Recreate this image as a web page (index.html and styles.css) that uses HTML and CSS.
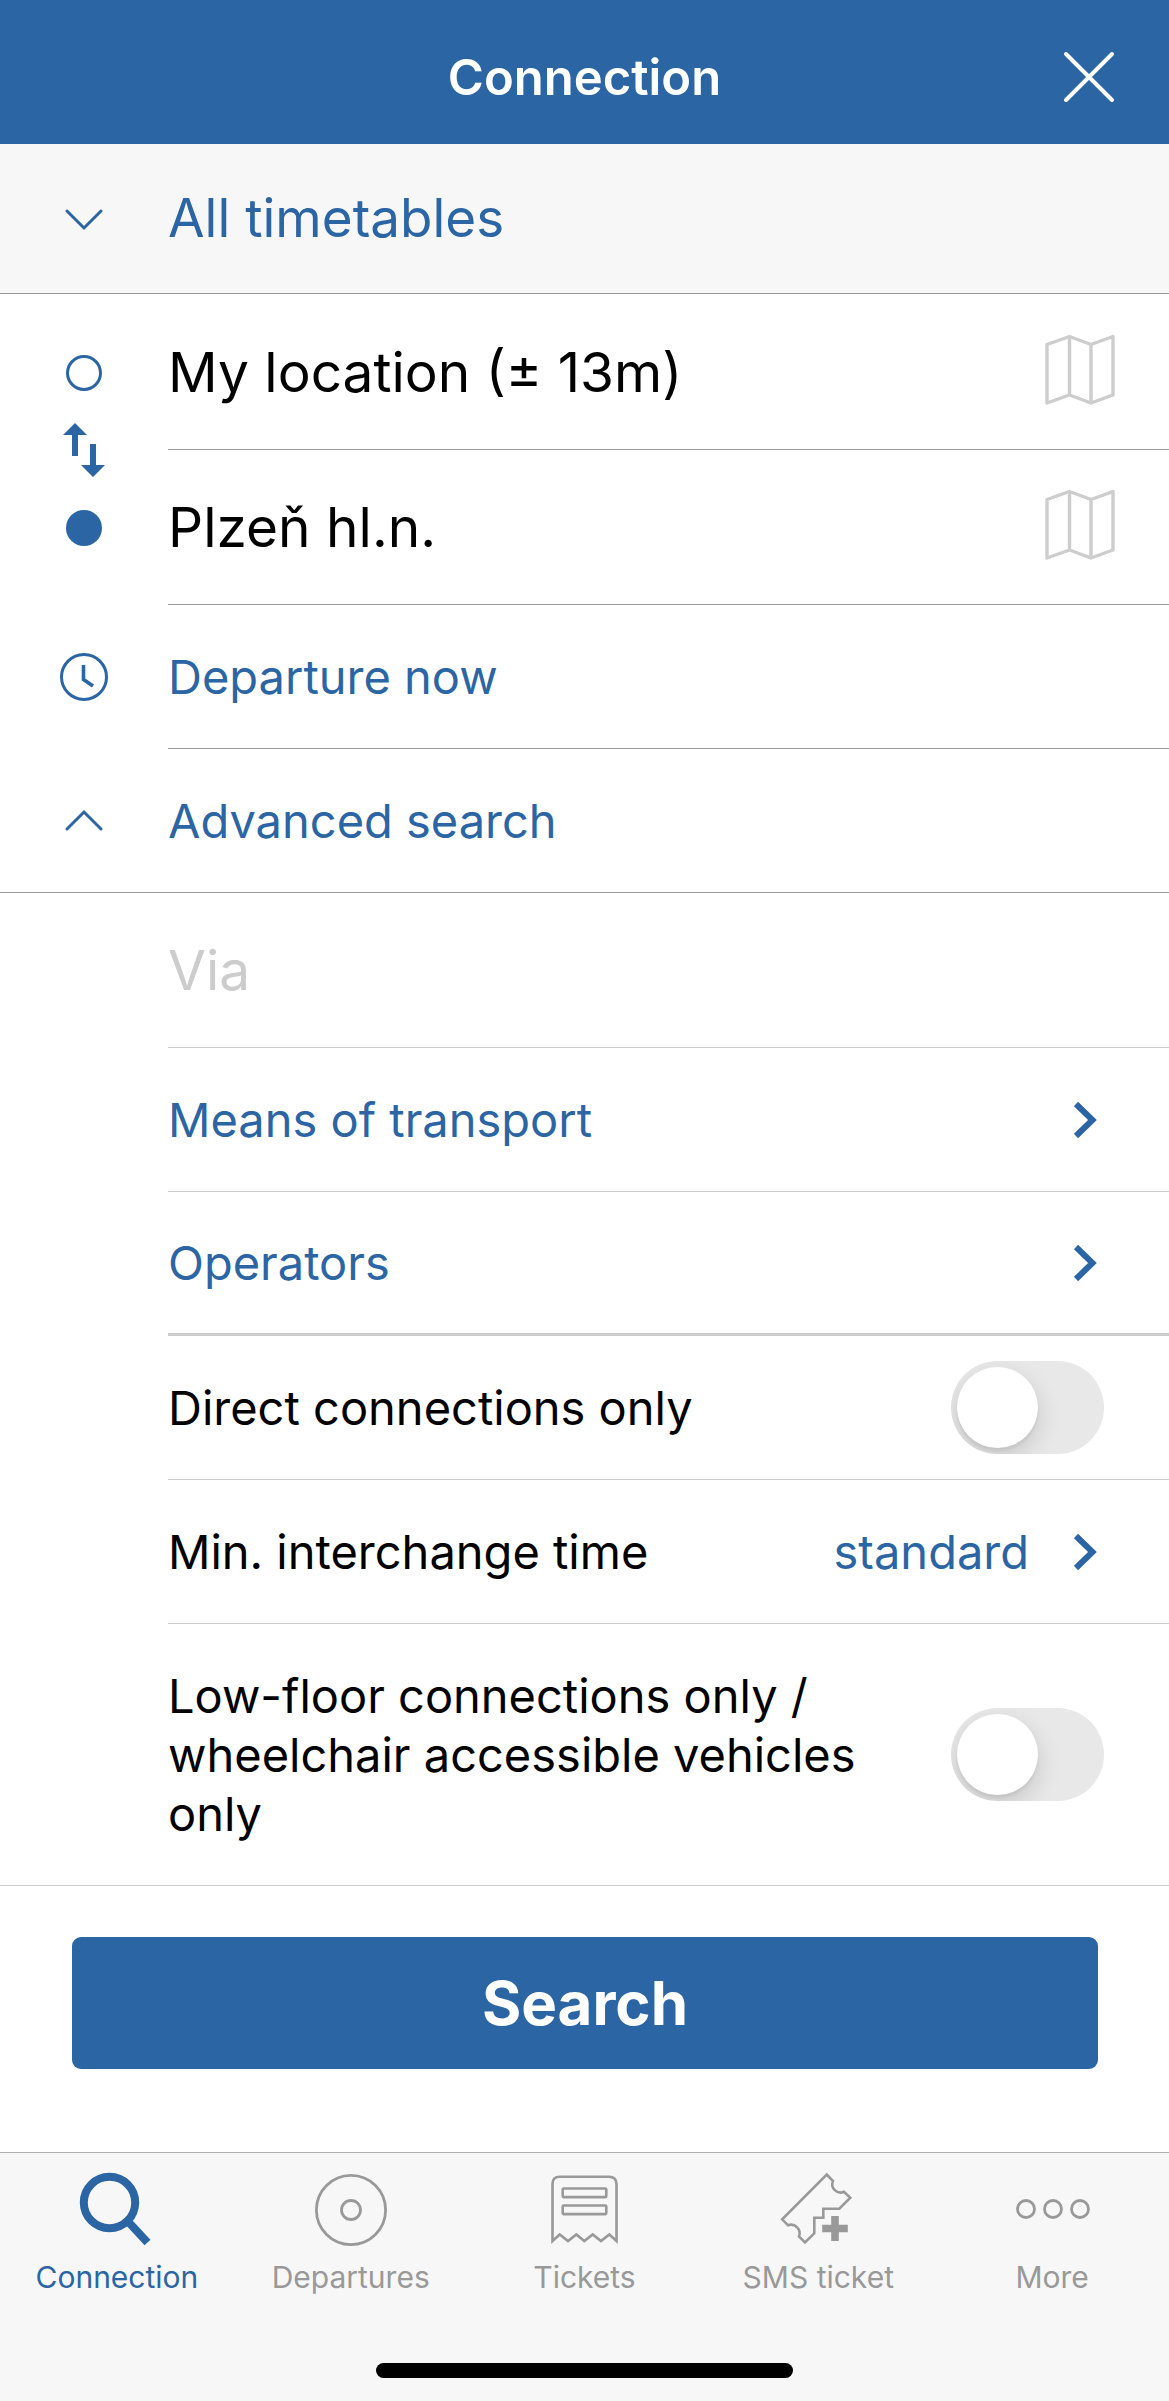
FILE: index.html
```
<!DOCTYPE html>
<html lang="en">
<head>
<meta charset="utf-8">
<meta name="viewport" content="width=device-width, initial-scale=1">
<title>Connection</title>
<link rel="stylesheet" href="styles.css">
</head>
<body>
<div class="app">
  <header class="header">
    <h1 class="header-title">Connection</h1>
    <button class="header-close" type="button" aria-label="Close">
      <svg width="54" height="54" viewBox="0 0 54 54" fill="none" stroke="currentColor" stroke-width="4" stroke-linecap="round"><path d="M4 4L50 50M50 4L4 50"/></svg>
    </button>
  </header>

  <form class="form">
    <button class="row row-full row-timetables" type="button">
      <span class="lead"><svg width="42" height="26" viewBox="0 0 42 26" fill="none" stroke="currentColor" stroke-width="3" stroke-linecap="round"><path d="M4 5L21 22L38 5"/></svg></span>
      <span class="body large">All timetables</span>
    </button>

    <div class="stations">
      <div class="row row-station">
        <label class="lead" for="from" aria-label="From"><svg width="36" height="36" viewBox="0 0 36 36" fill="none" stroke="currentColor" stroke-width="3"><circle cx="18" cy="18" r="16.5"/></svg></label>
        <div class="body">
          <input class="field station" id="from" type="text" value="My location (± 13m)">
          <button class="map" type="button" aria-label="Choose start on map">
            <svg width="72" height="76" viewBox="0 0 72 76" fill="none" stroke="currentColor" stroke-width="3.4" stroke-linejoin="round"><path d="M3 10.500L25.500 2.500L47 10.500L69 2.500V61L47 69L25.500 61L3 69ZM25.500 2.500V61M47 10.500V69"/></svg>
          </button>
        </div>
      </div>
      <div class="row row-station">
        <label class="lead" for="to" aria-label="To"><svg width="36" height="36" viewBox="0 0 36 36" fill="currentColor"><circle cx="18" cy="18" r="18"/></svg></label>
        <div class="body">
          <input class="field station" id="to" type="text" value="Plzeň hl.n.">
          <button class="map" type="button" aria-label="Choose destination on map">
            <svg width="72" height="76" viewBox="0 0 72 76" fill="none" stroke="currentColor" stroke-width="3.4" stroke-linejoin="round"><path d="M3 10.500L25.500 2.500L47 10.500L69 2.500V61L47 69L25.500 61L3 69ZM25.500 2.500V61M47 10.500V69"/></svg>
          </button>
        </div>
      </div>
      <button class="swap" type="button" aria-label="Swap stations">
        <svg width="42" height="54" viewBox="0 0 42 54" fill="currentColor"><path d="M12 0L24 12H15V33H9V12H0ZM27 21H33V42H42L30 54L18 42H27Z"/></svg>
      </button>
    </div>

    <button class="row" type="button">
      <span class="lead"><svg width="48" height="48" viewBox="0 0 48 48" fill="none" stroke="currentColor" stroke-width="3"><circle cx="24" cy="24" r="22.500"/><path stroke-width="3.600" d="M23.500 12V26.500L33 33"/></svg></span>
      <span class="body">Departure now</span>
    </button>
    <button class="row row-full" type="button">
      <span class="lead"><svg width="42" height="26" viewBox="0 0 42 26" fill="none" stroke="currentColor" stroke-width="3" stroke-linecap="round"><path d="M4 21L21 4L38 21"/></svg></span>
      <span class="body">Advanced search</span>
    </button>

    <div class="advanced">
      <div class="row row-station">
        <span class="lead"></span>
        <div class="body"><input class="field station" type="text" placeholder="Via" aria-label="Via"></div>
      </div>
      <button class="row" type="button">
        <span class="lead"></span>
        <span class="body">Means of transport <svg class="chevron" width="26" height="40" viewBox="0 0 26 40" fill="none" stroke="currentColor" stroke-width="6"><path d="M4 4L20.500 20L4 36"/></svg></span>
      </button>
      <button class="row row-group-end" type="button">
        <span class="lead"></span>
        <span class="body">Operators <svg class="chevron" width="26" height="40" viewBox="0 0 26 40" fill="none" stroke="currentColor" stroke-width="6"><path d="M4 4L20.500 20L4 36"/></svg></span>
      </button>
      <div class="row">
        <span class="lead"></span>
        <div class="body">
          <label class="option" for="direct">Direct connections only</label>
          <input class="toggle" id="direct" type="checkbox" role="switch">
        </div>
      </div>
      <button class="row" type="button">
        <span class="lead"></span>
        <span class="body">
          <span class="option">Min. interchange time</span>
          <span class="value">standard</span>
          <svg class="chevron" width="26" height="40" viewBox="0 0 26 40" fill="none" stroke="currentColor" stroke-width="6"><path d="M4 4L20.500 20L4 36"/></svg>
        </span>
      </button>
      <div class="row row-full row-tall">
        <span class="lead"></span>
        <div class="body">
          <label class="option" for="lowfloor">Low-floor connections only / wheelchair accessible vehicles only</label>
          <input class="toggle" id="lowfloor" type="checkbox" role="switch">
        </div>
      </div>
    </div>

    <div class="submit">
      <button class="search" type="submit">Search</button>
    </div>
  </form>

  <footer class="footer">
    <nav class="tabs">
      <a class="tab tab-active" href="#connection" aria-current="page">
        <svg width="80" height="80" viewBox="0 0 80 80" fill="none" stroke="currentColor" stroke-width="8"><circle cx="32.500" cy="32.500" r="25.700"/><path d="M51 51.500L70.500 72.500"/></svg>
        Connection
      </a>
      <a class="tab" href="#departures">
        <svg width="80" height="80" viewBox="0 0 80 80" fill="none" stroke="currentColor" stroke-width="2.800"><circle cx="40" cy="40" r="34.600"/><circle cx="40" cy="40" r="9.500"/></svg>
        Departures
      </a>
      <a class="tab" href="#tickets">
        <svg width="80" height="80" viewBox="0 0 80 80" fill="none" stroke="currentColor" stroke-width="2.600"><path d="M8.500 71V14Q8.500 6.700 16 6.700H65Q72.500 6.700 72.500 14V71L65.300 64.500L57 71L48.700 64.500L40.300 71L32.300 64.500L24 71L15.700 64.500Z"/><rect x="18.700" y="18.500" width="43.600" height="8.600" rx="1"/><rect x="18.700" y="35.500" width="43.600" height="8.600" rx="1"/></svg>
        Tickets
      </a>
      <a class="tab" href="#sms-ticket">
        <svg width="80" height="80" viewBox="0 0 80 80" fill="none" stroke="currentColor" stroke-width="2.600"><path d="M48.700 4.500L55 11A8.200 8.200 0 0 0 66 21.700L72.300 27.700L61.300 38.700H45.300V47.700H36.300V63.300L27 72.500L21 66.500A8.600 8.600 0 0 0 10 55.300L4.200 49.300Z"/><path stroke-width="7.600" d="M57 46V71M44.200 58.500H69.800"/></svg>
        SMS ticket
      </a>
      <a class="tab" href="#more">
        <svg width="80" height="80" viewBox="0 0 80 80" fill="none" stroke="currentColor" stroke-width="2.800"><circle cx="14" cy="39" r="8.500"/><circle cx="41" cy="39" r="8.500"/><circle cx="68" cy="39" r="8.500"/></svg>
        More
      </a>
    </nav>
    <div class="home-indicator"></div>
  </footer>
</div>
</body>
</html>
```
FILE: styles.css
```
:root {
  --blue: #2b65a4;
  --bar: #f7f7f7;
  --line: #999;
  --line-soft: #ccc;
  --muted: #999;
  --lead: 168px;
}

* { box-sizing: border-box; }

body {
  margin: 0;
  background: #fff;
  color: #000;
  font-family: Inter, "Liberation Sans", sans-serif;
  font-size: 47px;
  line-height: 59px;
}

button, input {
  margin: 0;
  padding: 0;
  border: 0;
  border-radius: 0;
  background: none;
  color: inherit;
  font: inherit;
  text-align: left;
}

svg { display: block; flex: none; }

.app {
  display: flex;
  flex-direction: column;
  min-height: 100vh;
}

.header {
  display: grid;
  grid-template-columns: 1fr auto 1fr;
  align-items: center;
  min-height: 144px;
  padding: 10px 53px 0;
  background: var(--blue);
  color: #fff;
}

.header-title {
  grid-column: 2;
  margin: 0;
  font-size: 49px;
  font-weight: 600;
}

.header-close { justify-self: end; }

.form {
  display: flex;
  flex-direction: column;
  flex: 1;
}

.row {
  display: flex;
  width: 100%;
  min-height: 144px;
  color: var(--blue);
}

.lead {
  display: flex;
  flex: none;
  align-items: center;
  justify-content: center;
  width: var(--lead);
}

.body {
  display: flex;
  flex: 1;
  align-items: center;
  min-width: 0;
  border-bottom: 1px solid var(--line);
}

.row-full { border-bottom: 1px solid var(--line); }
.row-full .body { border-bottom: 0; }

.row-timetables {
  min-height: 150px;
  background: var(--bar);
}

.row-station { min-height: 155px; }

.large { font-size: 53px; }
.station { font-size: 55px; }

.field {
  flex: 1;
  min-width: 0;
  height: 72px;
  color: #000;
  outline: 0;
}

.field::placeholder { color: var(--line-soft); opacity: 1; }

.map {
  margin-right: 53px;
  color: #cdcdcd;
}

.stations {
  position: relative;
  padding-top: 1px;
}

/* sits across the divider between the two stations */
.swap {
  position: absolute;
  top: 50%;
  left: calc(var(--lead) / 2);
  transform: translate(-50%, -50%);
  color: var(--blue);
}

.advanced .row-full,
.advanced .body { border-color: var(--line-soft); }

.advanced .row-group-end .body { border-bottom-width: 3px; }

.row-tall {
  min-height: 262px;
  padding: 42px 0;
}

.option {
  flex: 1;
  padding-right: 60px;
  color: #000;
}

.chevron {
  margin-left: auto;
  margin-right: 71px;
}

.value { margin-right: 43px; }

.toggle {
  display: flex;
  flex: none;
  align-items: center;
  width: 153px;
  height: 93px;
  margin-right: 65px;
  padding: 6px;
  border-radius: 47px;
  background: #e8e8e8;
  appearance: none;
  overflow: hidden;
}

.toggle::before {
  content: "";
  width: 81px;
  height: 81px;
  border-radius: 50%;
  background: #fff;
  box-shadow: 0 9px 24px rgba(0, 0, 0, .15), 0 3px 3px rgba(0, 0, 0, .06);
}

.toggle:checked {
  justify-content: flex-end;
  background: var(--blue);
}

.submit { padding: 51px 71px 82px 72px; }

.search {
  width: 100%;
  min-height: 132px;
  border-radius: 9px;
  background: var(--blue);
  color: #fff;
  font-size: 60px;
  font-weight: 700;
  text-align: center;
}

.footer {
  display: flex;
  flex-direction: column;
  align-items: center;
  justify-content: space-between;
  min-height: 249px;
  padding: 17px 0 23px;
  border-top: 1px solid #b0b0b0;
  background: var(--bar);
}

.tabs {
  display: grid;
  grid-template-columns: repeat(5, 1fr);
  width: 100%;
}

.tab {
  display: flex;
  flex-direction: column;
  align-items: center;
  gap: 9px;
  color: var(--muted);
  font-size: 30px;
  line-height: 36px;
  text-decoration: none;
}

.tab-active { color: var(--blue); }

.home-indicator {
  width: 417px;
  height: 15px;
  border-radius: 8px;
  background: #000;
}
```
